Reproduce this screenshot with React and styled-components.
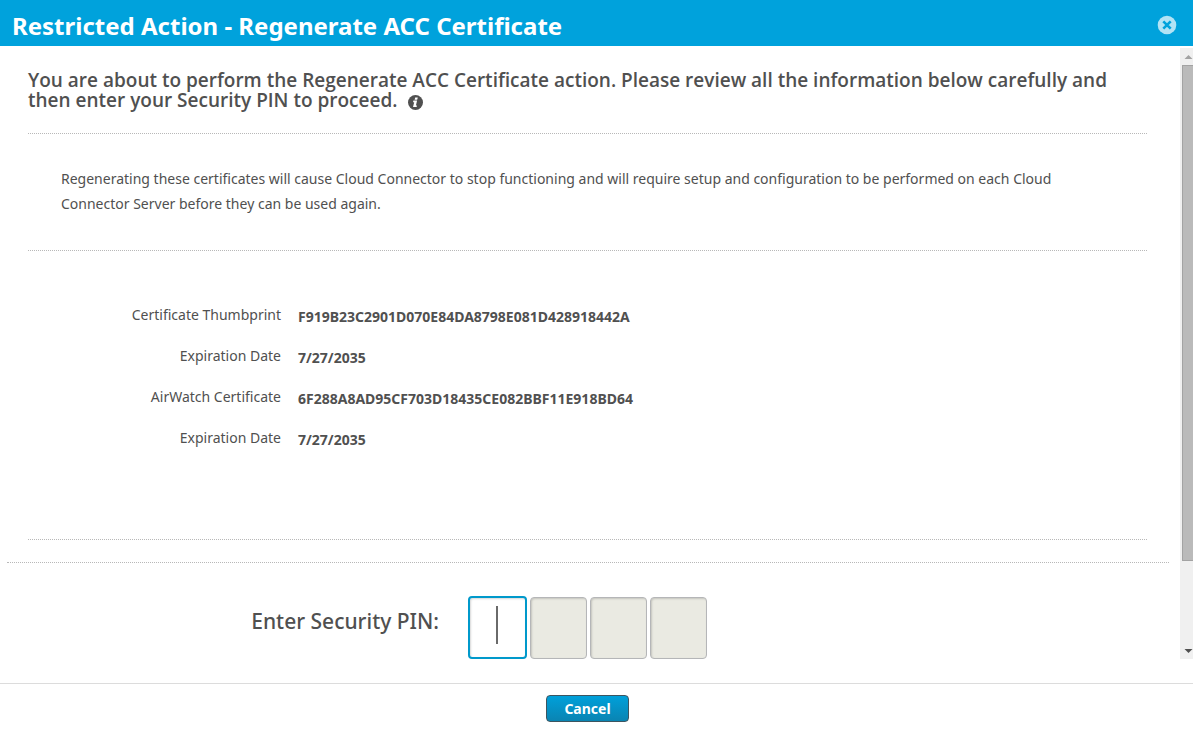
import React, { useState } from "react";
import styled, { createGlobalStyle } from "styled-components";

const Global = createGlobalStyle`
  *, *::before, *::after { box-sizing: border-box; }
  body { margin: 0; background: #fff; color: #505050; font-family: "Noto Sans", "Open Sans", sans-serif; font-size: 14px; }
  h1, h2, p, dl, dd, dt { margin: 0; }
`;

const Dialog = styled.div`
  display: flex;
  flex-direction: column;
  height: 100vh;
`;
const Header = styled.header`
  display: flex;
  flex: none;
  align-items: center;
  justify-content: space-between;
  height: 46px;
  padding: 4px 16px 0 12px;
  background: #00a2dc;
  color: #fff;
`;
const Title = styled.h1`
  padding-top: 2px;
  font-size: 24px;
  font-weight: 700;
  line-height: 32px;
  white-space: nowrap;
`;
const CloseButton = styled.button`
  display: flex;
  padding: 0;
  border: 0;
  background: none;
  cursor: pointer;
`;
const Body = styled.div`
  display: flex;
  flex: 1;
  min-height: 0;
  margin: 2px 0 24px;
  overflow: hidden;
`;
const Content = styled.main`
  flex: 1;
  min-width: 0;
  overflow: hidden;
`;
const Review = styled.div`
  padding: 22px 33px 22px 28px;
`;
const Section = styled.section`
  padding: ${(p) => p.$pad};
  border-bottom: 1px dotted #b8b8b8;
`;
const Lead = styled.h2`
  font-family: "Open Sans", sans-serif;
  font-size: 19px;
  font-weight: 600;
  line-height: 20px;
`;
const InfoIcon = styled.svg`
  margin-left: 6px;
  vertical-align: -3px;
`;
const Warning = styled.p`
  font-size: 14px;
  line-height: 25px;
`;
const Details = styled.dl`
  display: grid;
  grid-template-columns: 253px 1fr;
  column-gap: 17px;
  row-gap: 16px;
`;
const Term = styled.dt`
  text-align: right;
  line-height: 24px;
`;
const Value = styled.dd`
  padding-top: 3px;
  font-weight: 700;
  line-height: 22px;
`;
const PinSection = styled.fieldset`
  display: grid;
  grid-template-columns: 432px auto;
  justify-content: start;
  column-gap: 29px;
  margin: 0 11px 0 7px;
  padding: 33px 0 0;
  border: 0;
  border-top: 1px dotted #b8b8b8;
`;
const PinLabel = styled.label`
  padding-top: 11px;
  text-align: right;
  font-size: 21px;
  font-weight: 500;
  line-height: 28px;
`;
const PinBoxes = styled.div`
  display: flex;
  align-items: flex-end;
  gap: 3px;
`;
const PinCell = styled.span`
  position: relative;
  display: flex;
`;
const Caret = styled.span`
  position: absolute;
  top: 10px;
  left: 28px;
  width: 2px;
  height: 38px;
  background: #6a6a6a;
  pointer-events: none;
`;
const PinInput = styled.input`
  width: ${(p) => (p.$active ? 59 : 57)}px;
  height: ${(p) => (p.$active ? 63 : 62)}px;
  padding: 0;
  border: ${(p) => (p.$active ? "2px solid #0099cb" : "1px solid #b5b6b8")};
  border-radius: 4px;
  background: ${(p) => (p.$active ? "#fff" : "#eaeae2")};
  box-shadow: inset 1px 1px 2px rgba(0, 0, 0, 0.16);
  color: #505050;
  caret-color: transparent;
  font: 32px "Noto Sans", sans-serif;
  text-align: center;
  outline: 0;
`;
const Scrollbar = styled.div`
  display: flex;
  flex: none;
  flex-direction: column;
  align-items: flex-end;
  width: 13px;
  background: #f0f0f0;
`;
const ScrollArrow = styled.svg`
  flex: none;
  display: block;
`;
const Track = styled.div`
  flex: 1;
  width: 11px;
`;
const Thumb = styled.div`
  height: 86%;
  border: 1px solid #a3a3a3;
  border-right: 0;
  background: #bababa;
`;
const Footer = styled.footer`
  display: flex;
  flex: none;
  justify-content: center;
  align-items: flex-start;
  height: 58px;
  padding: 11px 18px 0 0;
  border-top: 1px solid #dcdcdc;
`;
const CancelButton = styled.button`
  width: 83px;
  height: 27px;
  padding: 0;
  border: 1px solid #3d5560;
  border-radius: 4px;
  background: linear-gradient(#00a0da, #0a84b2);
  color: #fff;
  font: 700 14px/20px "Noto Sans", sans-serif;
  cursor: pointer;
`;

const certificates = [
  ["Certificate Thumbprint", "F919B23C2901D070E84DA8798E081D428918442A"],
  ["Expiration Date", "7/27/2035"],
  ["AirWatch Certificate", "6F288A8AD95CF703D18435CE082BBF11E918BD64"],
  ["Expiration Date", "7/27/2035"],
];

export default function App() {
  const [pin, setPin] = useState(["", "", "", ""]);
  const [active, setActive] = useState(0);
  const update = (i, v) => setPin(pin.map((d, n) => (n === i ? v : d)));

  return (
    <Dialog role="dialog" aria-labelledby="dialog-title">
      <Global />
      <Header>
        <Title id="dialog-title">Restricted Action - Regenerate ACC Certificate</Title>
        <CloseButton type="button" aria-label="Close">
          <svg width="20" height="20" viewBox="0 0 20 20">
            <circle cx="10" cy="10" r="9.3" fill="#b2e3f5" />
            <path d="M6.3 6.3 13.7 13.7M13.7 6.3 6.3 13.7" stroke="#00a2dc" strokeWidth="2.6" />
          </svg>
        </CloseButton>
      </Header>
      <Body>
        <Content>
          <Review>
            <Section $pad="0 0 23px">
              <Lead>
                You are about to perform the Regenerate ACC Certificate action. Please review all the information below
                carefully and then enter your Security PIN to proceed.{" "}
                <InfoIcon width="15" height="15" viewBox="0 0 15 15" aria-hidden="true">
                  <circle cx="7.5" cy="7.5" r="7.5" fill="#505050" />
                  <path d="M7.2 2.4h2.6l-.6 2.3H6.6zM5.4 5.6h3.7L7.9 10.5h1.1l-.4 1.6H5l1.2-4.9H5z" fill="#fff" />
                </InfoIcon>
              </Lead>
            </Section>
            <Section $pad="32px 60px 34px 33px">
              <Warning>
                Regenerating these certificates will cause Cloud Connector to stop functioning and will require setup and
                configuration to be performed on each Cloud Connector Server before they can be used again.
              </Warning>
            </Section>
            <Section $pad="52px 0 88px">
              <Details>
                {certificates.map(([term, value], i) => (
                  <React.Fragment key={i}>
                    <Term>{term}</Term>
                    <Value>{value}</Value>
                  </React.Fragment>
                ))}
              </Details>
            </Section>
          </Review>
          <PinSection>
            <PinLabel htmlFor="pin-0">Enter Security PIN:</PinLabel>
            <PinBoxes>
              {pin.map((digit, i) => (
                <PinCell key={i}>
                  <PinInput
                    id={`pin-${i}`}
                    aria-label={`Security PIN digit ${i + 1}`}
                    maxLength={1}
                    value={digit}
                    $active={active === i}
                    onFocus={() => setActive(i)}
                    onChange={(e) => update(i, e.target.value)}
                  />
                  {active === i && !digit && <Caret />}
                </PinCell>
              ))}
            </PinBoxes>
          </PinSection>
        </Content>
        <Scrollbar aria-hidden="true">
          <ScrollArrow width="13" height="17" viewBox="0 0 13 17">
            <path d="M4.500 11 8.500 7 12.500 11z" fill="#a3a3a3" />
          </ScrollArrow>
          <Track>
            <Thumb />
          </Track>
          <ScrollArrow width="13" height="17" viewBox="0 0 13 17">
            <path d="M4.500 7 8.500 11 12.500 7z" fill="#505050" />
          </ScrollArrow>
        </Scrollbar>
      </Body>
      <Footer>
        <CancelButton type="button">Cancel</CancelButton>
      </Footer>
    </Dialog>
  );
}
